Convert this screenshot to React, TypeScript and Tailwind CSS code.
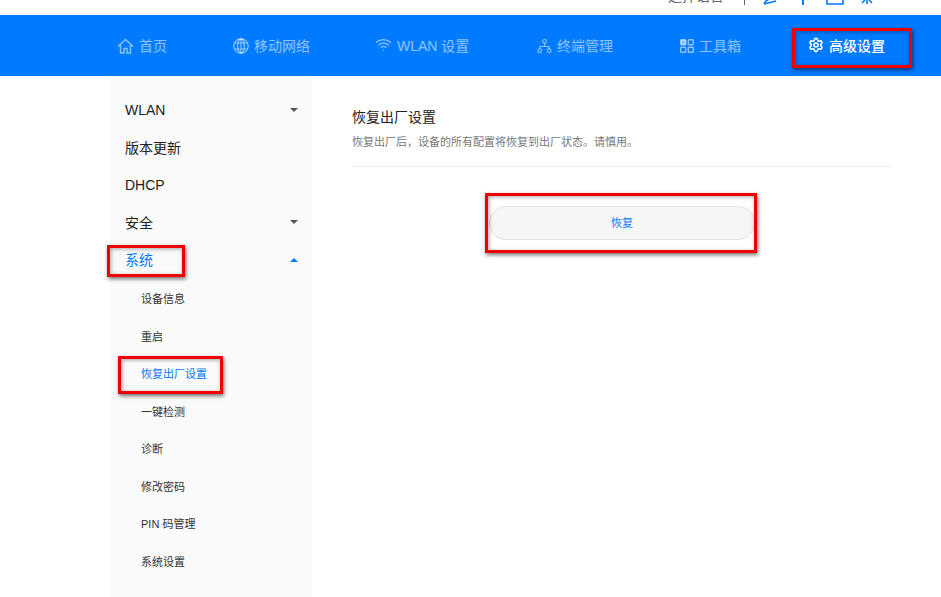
import React from 'react';
import { Wifi, Settings } from 'lucide-react';

const font = "font-['Liberation_Sans','Noto_Sans_CJK_SC',sans-serif]";

function HomeIcon() {
  return (
    <svg width="17" height="16" viewBox="0 0 17 16" fill="none" stroke="currentColor" strokeWidth="1.4">
      <path d="M1 8.5 8.5 1.5 16 8.5" />
      <path d="M3.5 7v8h3.5v-4.5h3V15h3.500V7" />
    </svg>
  );
}

function GlobeIcon() {
  return (
    <svg width="16" height="16" viewBox="0 0 16 16" fill="none" stroke="currentColor" strokeWidth="1.2">
      <circle cx="8" cy="8" r="7.2" />
      <ellipse cx="8" cy="8" rx="3.4" ry="7.2" />
      <path d="M8 .8v14.400M1.500 5h13M1.500 11h13" />
    </svg>
  );
}

function NetworkIcon() {
  return (
    <svg width="15" height="16" viewBox="0 0 16 16" fill="none" stroke="currentColor" strokeWidth="1.2">
      <circle cx="8" cy="3" r="2" />
      <circle cx="3" cy="13" r="2" />
      <circle cx="13" cy="13" r="2" />
      <path d="M8 5v3.500M3 11V8.500h10V11" />
    </svg>
  );
}

function GridIcon() {
  return (
    <svg width="14" height="14" viewBox="0 0 14 14" fill="none" stroke="currentColor" strokeWidth="1.4">
      <rect x="0.7" y="0.7" width="5" height="5" rx="0.8" fill="currentColor" />
      <rect x="8.300" y="0.7" width="5" height="5" rx="0.8" />
      <rect x="0.7" y="8.300" width="5" height="5" rx="0.8" />
      <rect x="8.300" y="8.300" width="5" height="5" rx="0.8" />
    </svg>
  );
}

const navItems = [
  { label: '首页', icon: <HomeIcon />, width: 'w-[116px]' },
  { label: '移动网络', icon: <GlobeIcon />, width: 'w-[142px]' },
  { label: 'WLAN 设置', icon: <Wifi className="w-[17px] h-[17px] -mt-[3px]" strokeWidth={1.8} />, width: 'w-[162px]' },
  { label: '终端管理', icon: <NetworkIcon />, width: 'w-[143px]' },
  { label: '工具箱', icon: <GridIcon />, width: 'w-[128px]' },
];

function RedBox({ className }: { className: string }) {
  return (
    <div className={`pointer-events-none absolute border-[3px] border-[#f00000] shadow-[1px_2px_4px_rgba(0,0,0,0.55),inset_1px_1px_4px_rgba(0,0,0,0.35)] ${className}`} />
  );
}

function Caret({ up, blue }: { up?: boolean; blue?: boolean }) {
  return (
    <span
      className={`w-0 h-0 border-x-[4px] border-x-transparent ${up ? 'border-b-[4px]' : 'border-t-[4px]'} ${
        blue ? 'border-b-[#007aff]' : 'border-t-[#555555]'
      }`}
    />
  );
}

function MenuRow({ label, caret, blue, cjk }: { label: string; caret?: 'up' | 'down'; blue?: boolean; cjk?: boolean }) {
  return (
    <div className={`h-[37.5px] flex items-center justify-between pl-[15px] pr-[14px] text-sm ${blue ? 'text-[#007aff]' : 'text-[#222222]'}`}>
      <span className={cjk ? 'pt-[2px]' : ''}>{label}</span>
      {caret && <Caret up={caret === 'up'} blue={blue} />}
    </div>
  );
}

function SubRow({ label, blue }: { label: string; blue?: boolean }) {
  return (
    <div className={`h-[37.5px] flex items-center pl-[31px] pt-[4px] text-[11px] ${blue ? 'text-[#007aff]' : 'text-[#333333]'}`}>
      {label}
    </div>
  );
}

export default function App() {
  return (
    <div className={`relative h-[597px] w-[941px] overflow-hidden bg-white ${font}`}>
      {/* top strip, clipped by the screenshot */}
      <div className="h-[15px] overflow-hidden flex items-end pl-[668px]">
        <span className="text-sm leading-[20px] mb-[9px] text-[#666666]">选择语言</span>
        <span className="ml-[20px] mb-[10px] w-px h-[6px] bg-[#666666]" />
        <svg className="ml-[18px] mb-[10px]" width="14" height="9" viewBox="0 0 14 9" fill="none" stroke="#007aff" strokeWidth="1.6">
          <path d="M1 8c1-3 4-5 9-6M1 8l12-3" />
        </svg>
        <span className="ml-[25px] mb-[10px] w-[2px] h-[6px] bg-[#007aff]" />
        <svg className="ml-[22px] mb-[10px]" width="18" height="9" viewBox="0 0 18 9" fill="none" stroke="#007aff" strokeWidth="1.6">
          <path d="M1 0v8h16V0" />
        </svg>
        <svg className="ml-[17px] mb-[10px]" width="12" height="9" viewBox="0 0 12 9" fill="none" stroke="#007aff" strokeWidth="1.6">
          <path d="M6 0v8M1 7l3-3M11 7 8 4" />
        </svg>
      </div>

      {/* nav */}
      <div className="relative h-[61px] bg-[#007aff] flex items-center pl-[117px] text-sm text-white/55">
        {navItems.map((item) => (
          <div key={item.label} className={`flex items-center gap-[5px] ${item.width}`}>
            {item.icon}
            <span>{item.label}</span>
          </div>
        ))}
        <div className="flex items-center gap-[5px] text-white font-medium">
          <Settings className="w-[16px] h-[16px] -mt-[2px]" strokeWidth={2.4} />
          <span>高级设置</span>
        </div>
      </div>

      <div className="flex pl-[110px] h-[521px]">
        {/* sidebar */}
        <div className="w-[202px] bg-[#fafafa] pt-[15px]">
          <MenuRow label="WLAN" caret="down" />
          <MenuRow label="版本更新" cjk />
          <MenuRow label="DHCP" />
          <MenuRow label="安全" caret="down" cjk />
          <MenuRow label="系统" caret="up" blue />
          <SubRow label="设备信息" />
          <SubRow label="重启" />
          <SubRow label="恢复出厂设置" blue />
          <SubRow label="一键检测" />
          <SubRow label="诊断" />
          <SubRow label="修改密码" />
          <SubRow label="PIN 码管理" />
          <SubRow label="系统设置" />
        </div>

        {/* content */}
        <div className="w-[540px] ml-[40px] pt-[32px]">
          <div className="text-sm leading-[18px] text-[#222222]">恢复出厂设置</div>
          <div className="mt-[9px] text-[11px] leading-[14px] text-[#777777]">恢复出厂后，设备的所有配置将恢复到出厂状态。请慎用。</div>
          <div className="mt-[17px] border-t border-[#ececec]" />
          <div className="mt-[39px] flex justify-center">
            <button className="w-[266px] h-[34px] rounded-full border border-[#e3e3e3] bg-[#f6f6f6] text-[11px] text-[#007aff]">恢复</button>
          </div>
        </div>
      </div>

      <RedBox className="left-[792px] top-[28px] w-[120px] h-[40px]" />
      <RedBox className="left-[107px] top-[245px] w-[78px] h-[32px]" />
      <RedBox className="left-[118px] top-[356px] w-[105px] h-[38px]" />
      <RedBox className="left-[485px] top-[193px] w-[272px] h-[60px]" />
    </div>
  );
}
